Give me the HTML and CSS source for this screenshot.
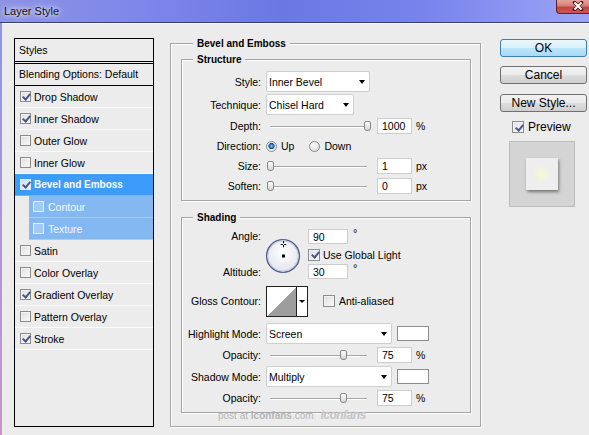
FILE: index.html
```html
<!DOCTYPE html>
<html lang="en">
<head>
  <meta charset="UTF-8" />
  <title>Layer Style</title>
  <link rel="stylesheet" href="styles.css">
</head>
<body>
  <div class="window">
    <div class="titlebar">
      <span class="title">Layer Style</span>
      <div class="close">
        <svg width="12" height="10" viewBox="0 0 12 10">
          <path d="M2.5 1.5l7 7M9.5 1.5l-7 7" stroke="#5a1818" stroke-width="3.6" stroke-linecap="round"/>
          <path d="M2.5 1.5l7 7M9.5 1.5l-7 7" stroke="#ffffff" stroke-width="2"/>
        </svg>
      </div>
    </div>

    <div class="dialog">
      <div class="styles-panel">
        <div class="panel-head">Styles</div>
        <div class="panel-blend">Blending Options: Default</div>
        <div class="style-item"><span class="cb checked"></span>Drop Shadow</div>
        <div class="style-item"><span class="cb checked"></span>Inner Shadow</div>
        <div class="style-item"><span class="cb"></span>Outer Glow</div>
        <div class="style-item"><span class="cb"></span>Inner Glow</div>
        <div class="style-item selected"><span class="cb checked"></span>Bevel and Emboss</div>
        <div class="style-item sub"><span class="cb"></span>Contour</div>
        <div class="style-item sub"><span class="cb"></span>Texture</div>
        <div class="style-item"><span class="cb"></span>Satin</div>
        <div class="style-item"><span class="cb"></span>Color Overlay</div>
        <div class="style-item"><span class="cb checked"></span>Gradient Overlay</div>
        <div class="style-item"><span class="cb"></span>Pattern Overlay</div>
        <div class="style-item"><span class="cb checked"></span>Stroke</div>
      </div>

      <div class="group main-group">
        <div class="group-title">Bevel and Emboss</div>

        <div class="group structure">
          <div class="group-title">Structure</div>
          <div class="rows">
            <div class="row select-row">
              <span class="lbl">Style:</span>
              <div class="select select-style">Inner Bevel</div>
            </div>
            <div class="row select-row">
              <span class="lbl">Technique:</span>
              <div class="select select-tech">Chisel Hard</div>
            </div>
            <div class="row">
              <span class="lbl">Depth:</span>
              <div class="slider"><span class="thumb" style="left: 98px"></span></div>
              <span class="num">1000</span><span class="unit">%</span>
            </div>
            <div class="row">
              <span class="lbl">Direction:</span>
              <span class="radio on"></span><span class="opt">Up</span>
              <span class="radio down"></span><span class="opt">Down</span>
            </div>
            <div class="row">
              <span class="lbl">Size:</span>
              <div class="slider"><span class="thumb" style="left: 1px"></span></div>
              <span class="num">1</span><span class="unit">px</span>
            </div>
            <div class="row">
              <span class="lbl">Soften:</span>
              <div class="slider"><span class="thumb" style="left: 1px"></span></div>
              <span class="num">0</span><span class="unit">px</span>
            </div>
          </div>
        </div>

        <div class="group shading">
          <div class="group-title">Shading</div>

          <div class="angle-block">
            <span class="lbl angle-lbl">Angle:</span>
            <svg class="dial" width="36" height="36" viewBox="0 0 36 36">
              <defs>
                <radialGradient id="dialFill" cx="50%" cy="40%" r="60%">
                  <stop offset="0" stop-color="#ffffff"/>
                  <stop offset="1" stop-color="#e2e4ec"/>
                </radialGradient>
              </defs>
              <circle cx="18" cy="18" r="16.4" fill="url(#dialFill)" stroke="#52608c" stroke-width="1.4"/>
              <circle cx="18" cy="18" r="15.1" fill="none" stroke="#c7cbdc" stroke-width="1"/>
              <path d="M18.5 3v2.2M18.5 7v2.2M15.8 6.5h2M19.2 6.5h2" stroke="#000" stroke-width="1"/>
              <rect x="17" y="16.5" width="3" height="3" fill="#000"/>
            </svg>
            <div class="angle-field angle-top"><span class="num num-deg">90</span><span class="deg">°</span></div>
            <div class="global-light"><span class="cb big checked"></span>Use Global Light</div>
            <span class="lbl alt-lbl">Altitude:</span>
            <div class="angle-field angle-bottom"><span class="num num-deg">30</span><span class="deg">°</span></div>
          </div>

          <div class="row gloss-row">
            <span class="lbl">Gloss Contour:</span>
            <div class="contour">
              <div class="contour-curve"></div>
              <div class="contour-drop"><span class="arrow"></span></div>
            </div>
            <span class="cb big anti"></span><span class="opt">Anti-aliased</span>
          </div>

          <div class="row select-row mode-row">
            <span class="lbl">Highlight Mode:</span>
            <div class="select select-mode">Screen</div>
            <span class="swatch"></span>
          </div>
          <div class="row">
            <span class="lbl">Opacity:</span>
            <div class="slider"><span class="thumb" style="left: 74px"></span></div>
            <span class="num">75</span><span class="unit">%</span>
          </div>
          <div class="row select-row">
            <span class="lbl">Shadow Mode:</span>
            <div class="select select-mode">Multiply</div>
            <span class="swatch"></span>
          </div>
          <div class="row">
            <span class="lbl">Opacity:</span>
            <div class="slider"><span class="thumb" style="left: 74px"></span></div>
            <span class="num">75</span><span class="unit">%</span>
          </div>
        </div>

        <div class="watermark">post at <b>iconfans</b>.com <span class="wm-logo">iconfans</span></div>
      </div>

      <div class="actions">
        <button class="btn btn-ok">OK</button>
        <button class="btn btn-cancel">Cancel</button>
        <button class="btn btn-new">New Style...</button>
        <div class="preview-check"><span class="cb big checked"></span>Preview</div>
        <div class="preview">
          <div class="preview-swatch"></div>
        </div>
      </div>
    </div>
  </div>
</body>
</html>
```

FILE: styles.css
```css
body {
  margin: 0;
  font-family: "Liberation Sans", Arial, sans-serif;
  font-size: 10.5px;
  color: #000;
  background: #ececec;
  overflow: hidden;
}

.window {
  width: 589px;
  height: 435px;
  display: flex;
  flex-direction: column;
  overflow: hidden;
}

/* title bar */
.titlebar {
  height: 22px;
  flex: none;
  display: flex;
  align-items: flex-start;
  background: linear-gradient(90deg, #8d92e4 0%, #7f88ea 22%, #6b78e4 48%, #7884ec 72%, #9da4f6 100%);
  border-bottom: 1px solid #3b4070;
}

.title {
  padding: 4px 0 0 4px;
  font-size: 11px;
  line-height: 14px;
  color: #111;
  text-shadow: 0 0 4px #fff, 0 0 8px rgba(255, 255, 255, 0.9);
}

.close {
  margin-left: auto;
  margin-right: -10px;
  width: 43px;
  height: 14px;
  box-sizing: border-box;
  display: flex;
  justify-content: center;
  padding-top: 1px;
  border: 1px solid #5e2020;
  border-top: none;
  border-radius: 0 0 4px 4px;
  background: linear-gradient(#e6a39d, #d67e77 45%, #c1453e 55%, #c95a50);
}

/* dialog body */
.dialog {
  flex: 1;
  display: flex;
  align-items: flex-start;
  padding: 15px 0 0 12px;
  border-left: 2px solid #8f95e8;
  border-image: linear-gradient(#8f95e8, #c994c9) 1;
  box-shadow: inset 0 1px #f7f7f7;
}

/* left list */
.styles-panel {
  width: 140px;
  height: 389px;
  box-sizing: border-box;
  border: 1px solid #000;
  flex: none;
}

.panel-head {
  height: 22px;
  line-height: 22px;
  padding-left: 4px;
  border-bottom: 1px solid #000;
}

.panel-blend {
  margin-top: 1px;
  height: 21px;
  line-height: 21px;
  padding-left: 4px;
  border-top: 1px solid #000;
  border-bottom: 1px solid #000;
}

.style-item {
  height: 21px;
  display: flex;
  align-items: center;
  gap: 3px;
  padding-left: 5px;
  border-bottom: 1px solid #fbfbfb;
}

.style-item.selected {
  background: #3d9bfb;
  color: #fff;
  font-weight: bold;
  font-size: 10px;
  border-bottom-color: #6fb3f8;
}

.style-item.sub {
  margin-left: 14px;
  padding-left: 4px;
  gap: 4px;
  background: #84b8f0;
  color: #f4f8ff;
  border-bottom-color: #a9cdf6;
}

/* checkboxes */
.cb {
  position: relative;
  width: 11px;
  height: 11px;
  box-sizing: border-box;
  flex: none;
  border: 1px solid #8c8c8c;
  background: linear-gradient(135deg, #dedede, #fbfbfb);
  box-shadow: inset 0 0 0 1px #f2f2f2;
}

.cb.big {
  width: 12px;
  height: 12px;
}

.cb.checked::after {
  content: '';
  position: absolute;
  left: 3px;
  top: 0;
  width: 3px;
  height: 6px;
  border: solid #46558f;
  border-width: 0 2px 2px 0;
  transform: rotate(40deg);
}

.cb.big.checked::after {
  left: 3.5px;
  top: 0.5px;
}

.selected .cb {
  border-color: #d6e8fb;
  background: linear-gradient(135deg, #c9def5, #eef5fd);
  box-shadow: none;
}

.sub .cb {
  border-color: #e2eefb;
  background: rgba(255, 255, 255, 0.25);
  box-shadow: none;
}

/* group boxes */
.group {
  border: 1px solid #a4a4a4;
  box-shadow: inset 1px 1px #fff, 1px 1px #fff;
}

.group-title {
  width: max-content;
  margin: -7px 0 0 12px;
  padding: 0 4px;
  height: 13px;
  line-height: 13px;
  background: #ececec;
  font-weight: bold;
  font-size: 10px;
}

.structure .group-title,
.shading .group-title {
  margin-left: 11px;
}

.main-group {
  width: 311px;
  box-sizing: border-box;
  flex: none;
  margin: 5px 0 0 16px;
  padding: 0 9px 5px 10px;
}

.structure {
  margin-top: 9px;
  padding-bottom: 4px;
}

.structure .rows {
  margin-top: 4px;
}

.shading {
  margin-top: 16px;
  padding-bottom: 4px;
}

/* rows */
.row {
  height: 20px;
  display: flex;
  align-items: center;
}

.row.select-row {
  height: 23px;
}

.lbl {
  width: 79px;
  margin-right: 5px;
  text-align: right;
  flex: none;
}

.select {
  height: 21px;
  box-sizing: border-box;
  display: flex;
  align-items: center;
  justify-content: space-between;
  padding: 0 4px 0 2px;
  border: 1px solid #cfcfcf;
  border-radius: 2px;
  background: #fff;
}

.select::after {
  content: '';
  border-left: 3.5px solid transparent;
  border-right: 3.5px solid transparent;
  border-top: 4px solid #000;
}

.select-style { width: 104px; }
.select-tech { width: 88px; }
.select-mode { width: 126px; }

.slider {
  position: relative;
  width: 106px;
  height: 12px;
  flex: none;
}

.slider::before {
  content: '';
  position: absolute;
  left: 4px;
  right: 5px;
  top: 6px;
  height: 1px;
  background: #a6a6a6;
  box-shadow: 0 1px #fff;
}

.thumb {
  position: absolute;
  top: 1px;
  width: 7px;
  height: 10px;
  box-sizing: border-box;
  border: 1px solid #868686;
  border-radius: 2px 2px 3px 3px;
  background: linear-gradient(#fdfdfd, #d6d6d6);
}

.num {
  width: 35px;
  height: 16px;
  box-sizing: border-box;
  margin-left: 5px;
  padding-left: 4px;
  line-height: 15px;
  border: 1px solid #cdcdcd;
  background: #fff;
  flex: none;
}

.unit {
  margin-left: 4px;
}

.radio {
  width: 11px;
  height: 11px;
  box-sizing: border-box;
  border-radius: 50%;
  border: 1px solid #8a8a8a;
  background: radial-gradient(circle at 40% 35%, #ffffff, #d2d2d2);
  flex: none;
}

.radio.on {
  background: radial-gradient(circle at 50% 45%, #9ad6ff 0, #2b80d2 1.6px, #0f4f98 2.8px, #e6e6e6 3.4px, #ffffff 100%);
}

.radio.down {
  margin-left: 15px;
}

.opt {
  margin-left: 4px;
}

/* angle dial */
.angle-block {
  margin-top: 3px;
  display: grid;
  grid-template-columns: 84px 42px auto;
  grid-template-rows: 18px 19px 15px;
}

.angle-lbl {
  grid-column: 1;
  grid-row: 1;
  align-self: center;
}

.alt-lbl {
  grid-column: 1;
  grid-row: 3;
  align-self: center;
}

.dial {
  grid-column: 2;
  grid-row: 1 / 4;
  margin: 11px 0 0 -1px;
}

.angle-field {
  grid-column: 3;
  display: flex;
  align-items: flex-start;
  align-self: center;
}

.angle-top { grid-row: 1; }
.angle-bottom { grid-row: 3; }

.num-deg {
  width: 40px;
  height: 15px;
  line-height: 14px;
  margin-left: 0;
}

.deg {
  margin-left: 5px;
  line-height: 8px;
  font-size: 11px;
}

.global-light {
  grid-column: 3;
  grid-row: 2;
  display: flex;
  align-items: center;
  gap: 3px;
}

/* gloss contour */
.row.gloss-row {
  height: 30px;
  margin-top: 7px;
}

.contour {
  display: flex;
  height: 31px;
  box-sizing: border-box;
  border: 1px solid #222;
  background: #fff;
}

.contour-curve {
  width: 29px;
  border-right: 1px solid #222;
  background: linear-gradient(to top left, #9d9d9d 50%, #fff 50%);
}

.contour-drop {
  width: 10px;
  display: flex;
  align-items: center;
  justify-content: center;
}

.arrow {
  border-left: 3px solid transparent;
  border-right: 3px solid transparent;
  border-top: 3px solid #000;
}

.cb.anti {
  margin-left: 15px;
}

.row.mode-row {
  margin-top: 6px;
}

.swatch {
  width: 32px;
  height: 15px;
  box-sizing: border-box;
  margin-left: 5px;
  border: 1px solid #8d8d8d;
  background: #fff;
}

.watermark {
  margin: -3px 0 0 37px;
  height: 11px;
  line-height: 11px;
  font-size: 10px;
  color: #b4b4b4;
}

.wm-logo {
  margin-left: 4px;
  font-size: 12px;
  font-weight: bold;
  font-style: italic;
  letter-spacing: -0.5px;
  color: #c4c4c4;
}

/* right buttons */
.actions {
  width: 87px;
  margin: 1px 0 0 19px;
  display: flex;
  flex-direction: column;
  align-items: flex-start;
  flex: none;
}

.btn {
  width: 87px;
  height: 18px;
  box-sizing: border-box;
  padding: 0;
  font: inherit;
  font-size: 12px;
  line-height: 16px;
  color: #000;
  border: 1px solid #707070;
  border-radius: 3px;
  background: linear-gradient(#f2f2f2 0%, #ebebeb 50%, #dddddd 50%, #cfcfcf 100%);
}

.btn-ok {
  border-color: #3c7fb1;
  background: linear-gradient(#eaf6fd 0%, #d9f0fc 50%, #bee6fd 50%, #a7d9f5 100%);
}

.btn-cancel {
  margin-top: 9px;
}

.btn-new {
  margin-top: 10px;
}

.preview-check {
  display: flex;
  align-items: center;
  gap: 4px;
  margin: 9px 0 0 12px;
  font-size: 12px;
  line-height: 12px;
}

.preview {
  width: 66px;
  height: 66px;
  box-sizing: border-box;
  margin: 8px 0 0 9px;
  border: 1px solid #bdbdbd;
  background: #d4d4d4;
  display: flex;
  align-items: center;
  justify-content: center;
}

.preview-swatch {
  width: 32px;
  height: 32px;
  background: radial-gradient(circle, #f5f9cc 0, #f3f5de 4px, #eeeeee 9px);
  box-shadow: 1px 2px 3px rgba(0, 0, 0, 0.45);
}
```
